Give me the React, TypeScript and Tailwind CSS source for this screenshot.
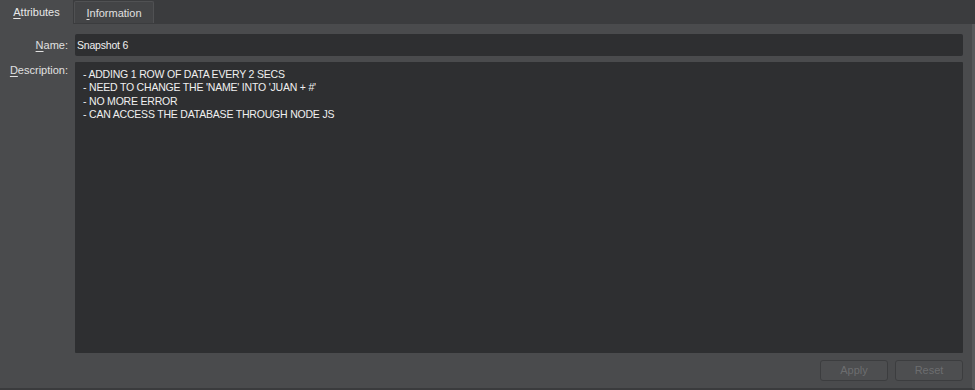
import { useState } from "react";

const notes = [
  "- ADDING 1 ROW OF DATA EVERY 2 SECS",
  "- NEED TO CHANGE THE 'NAME' INTO 'JUAN + #'",
  "- NO MORE ERROR",
  "- CAN ACCESS THE DATABASE THROUGH NODE JS",
];

export default function App() {
  const [tab, setTab] = useState("attributes");
  const [name, setName] = useState("Snapshot 6");
  const [desc, setDesc] = useState(notes.join("\n"));

  return (
    <div
      className="w-[975px] h-[390px] bg-[#3b3c3e] text-[11px] text-[#e4e4e4] flex flex-col overflow-hidden"
      style={{ fontFamily: "Tahoma, 'Liberation Sans', Arial, sans-serif" }}
    >
      {/* tab strip */}
      <div className="flex items-end h-[24px] shrink-0">
        <button
          onClick={() => setTab("attributes")}
          className="h-[24px] w-[73px] bg-[#4a4b4d] text-[#e8e8e8] pt-[1px]"
        >
          <span className="underline underline-offset-2">A</span>ttributes
        </button>
        <button
          onClick={() => setTab("information")}
          className="h-[22px] w-[80px] ml-[1px] mb-[1px] bg-[#434446] border border-[#505153] border-b-0 rounded-t-[2px] text-[#e0e0e0] pt-[2px]"
        >
          <span className="underline underline-offset-2">I</span>nformation
        </button>
      </div>

      {/* panel */}
      <div className="flex-1 bg-[#4a4b4d] border-r-[3px] border-r-[#58595b] border-b-[2px] border-b-[#3a3b3d] flex flex-col pt-[10px] pb-[7px] pr-[9px]">
        <div className="flex items-center h-[22px]">
          <label className="w-[70px] text-right pr-[2px] text-[#e0e0e0]">
            <span className="underline underline-offset-2">N</span>ame:
          </label>
          <input
            value={name}
            onChange={(e) => setName(e.target.value)}
            className="ml-[5px] flex-1 h-[22px] bg-[#2e2f31] rounded-[2px] px-[2px] text-[10.5px] tracking-[-0.2px] text-[#f0f0f0] outline-none"
          />
        </div>

        <div className="flex mt-[6px] flex-1">
          <label className="w-[70px] text-right pr-[2px] text-[#e0e0e0]">
            <span className="underline underline-offset-2">D</span>escription:
          </label>
          <textarea
            value={desc}
            onChange={(e) => setDesc(e.target.value)}
            className="ml-[5px] flex-1 bg-[#2e2f31] rounded-[1px] pl-[8px] pt-[6px] text-[10.5px] tracking-[-0.2px] leading-[13.3px] text-[#f0f0f0] outline-none resize-none"
          />
        </div>

        <div className="flex justify-end gap-[7px] mt-[7px]">
          <button
            disabled
            className="w-[68px] h-[21px] rounded-[3px] border border-[#3c3d3f] bg-[#4d4e50] text-[#6c6d6f]"
          >
            Apply
          </button>
          <button
            disabled
            className="w-[68px] h-[21px] rounded-[3px] border border-[#3c3d3f] bg-[#4d4e50] text-[#6c6d6f]"
          >
            Reset
          </button>
        </div>
      </div>
    </div>
  );
}
